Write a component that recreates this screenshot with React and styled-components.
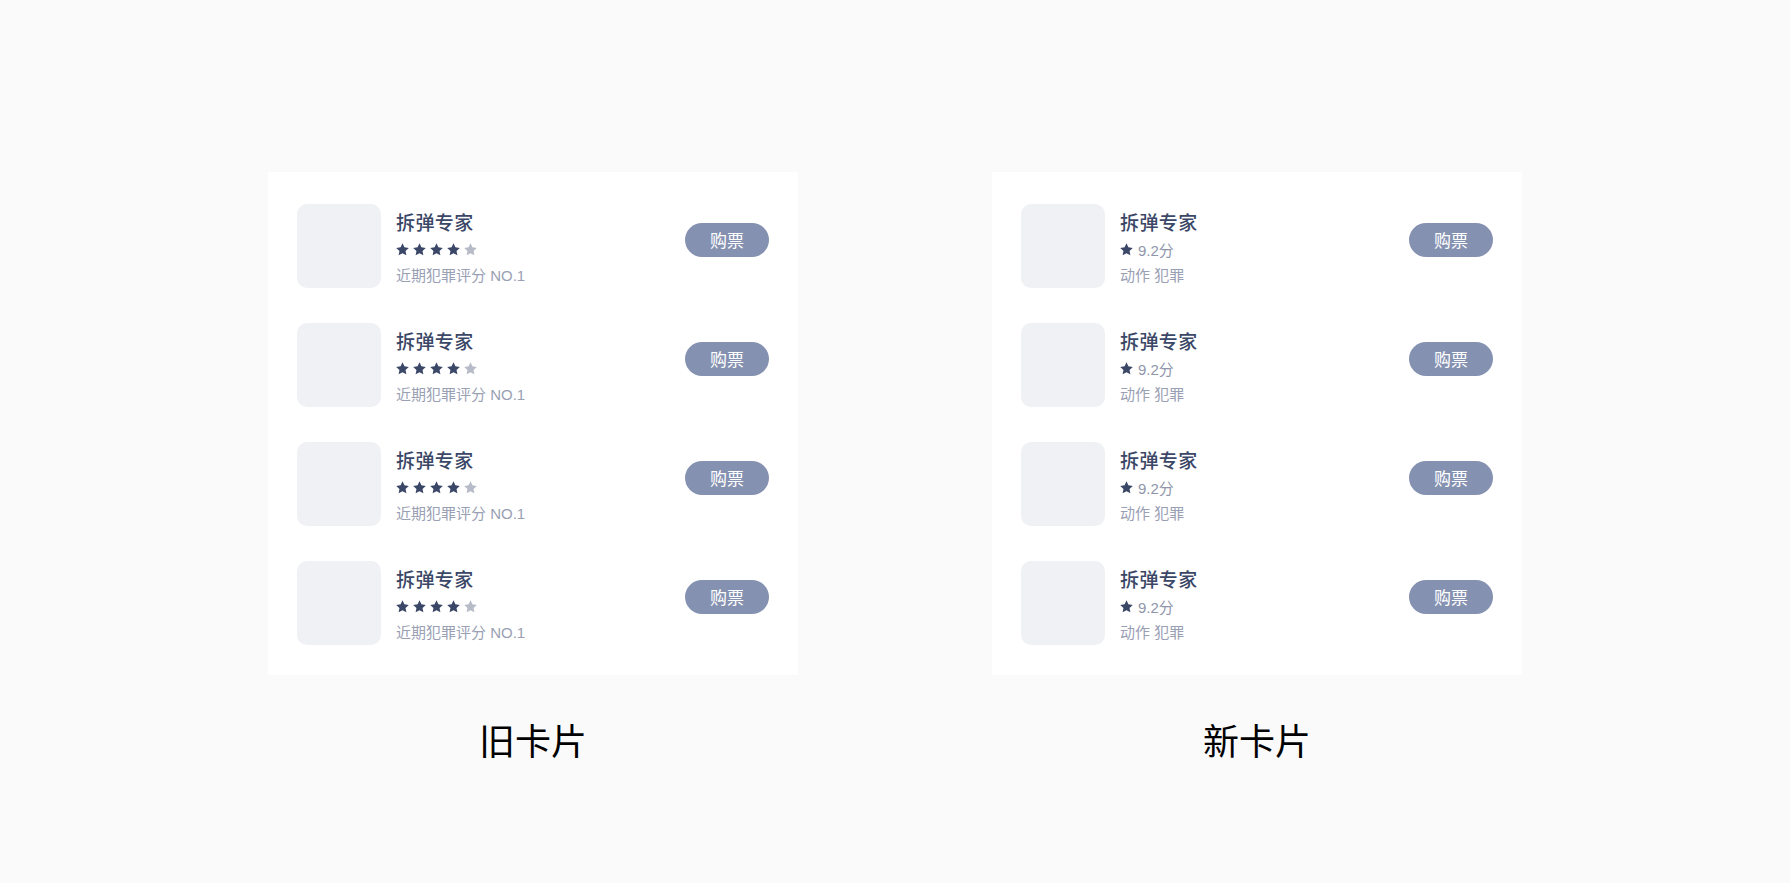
import React from 'react';
import styled, { createGlobalStyle } from 'styled-components';

const GlobalStyle = createGlobalStyle`
  html, body {
    margin: 0;
    padding: 0;
    background: #fafafa;
  }
  body {
    font-family: "Noto Sans CJK SC", "Noto Sans", sans-serif;
  }
`;

const Page = styled.div`
  width: 1790px;
  height: 883px;
  background: #fafafa;
  padding-top: 172px;
  box-sizing: border-box;
  display: flex;
  justify-content: center;
  gap: 194px;
`;

const Column = styled.div`
  display: flex;
  flex-direction: column;
  align-items: center;
`;

const Card = styled.div`
  width: 530px;
  height: 503px;
  box-sizing: border-box;
  background: #ffffff;
  padding: 32px 29px 30px 29px;
  display: flex;
  flex-direction: column;
  gap: 35px;
`;

const Row = styled.div`
  display: flex;
  align-items: flex-start;
  height: 84px;
`;

const Poster = styled.div`
  width: 84px;
  height: 84px;
  border-radius: 10px;
  background: #f0f1f5;
  flex-shrink: 0;
`;

const Info = styled.div`
  flex: 1;
  margin-left: 15px;
  padding-top: 4px;
  display: flex;
  flex-direction: column;
`;

const Title = styled.div`
  font-size: 19px;
  font-weight: 500;
  line-height: 28px;
  color: #3b4767;
  letter-spacing: 0.4px;
`;

const StarRow = styled.div`
  display: flex;
  align-items: center;
  gap: 4px;
  height: 13px;
  margin-top: 7px;
`;

const ScoreRow = styled.div`
  display: flex;
  align-items: center;
  gap: 5px;
  height: 20px;
  margin-top: 3px;
  font-family: "Liberation Sans", "Noto Sans CJK SC", sans-serif;
  font-size: 15px;
  color: #8f96ab;
`;

const Sub = styled.div`
  font-family: "Liberation Sans", "Noto Sans CJK SC", sans-serif;
  font-size: 15px;
  line-height: 24px;
  color: #9aa0b4;
  margin-top: ${p => (p.tight ? '5px' : '8px')};
`;

const BuyButton = styled.button`
  margin-top: 19px;
  width: 84px;
  height: 34px;
  border: none;
  border-radius: 17px;
  background: #8591b1;
  color: #ffffff;
  font-family: "Noto Sans CJK SC", sans-serif;
  font-size: 17px;
  line-height: 34px;
  padding: 0;
  flex-shrink: 0;
`;

const Label = styled.div`
  margin-top: 46px;
  font-size: 36px;
  line-height: 36px;
  color: #000000;
`;

function Star({ color }) {
  return (
    <svg width="13" height="13" viewBox="0 0 24 24">
      <path
        fill={color}
        d="M12 0.6l3.5 7.4 8.1 1-6 5.6 1.6 8.1L12 18.7l-7.2 4 1.6-8.1-6-5.6 8.1-1z"
      />
    </svg>
  );
}

function OldRow() {
  return (
    <Row>
      <Poster />
      <Info>
        <Title>拆弹专家</Title>
        <StarRow>
          {[0, 1, 2, 3, 4].map(i => (
            <Star key={i} color={i < 4 ? '#3b4767' : '#b7bbc8'} />
          ))}
        </StarRow>
        <Sub>近期犯罪评分 NO.1</Sub>
      </Info>
      <BuyButton>购票</BuyButton>
    </Row>
  );
}

function NewRow() {
  return (
    <Row>
      <Poster />
      <Info>
        <Title>拆弹专家</Title>
        <ScoreRow>
          <Star color="#3b4767" />
          <span>9.2分</span>
        </ScoreRow>
        <Sub tight>动作 犯罪</Sub>
      </Info>
      <BuyButton>购票</BuyButton>
    </Row>
  );
}

export default function App() {
  const rows = [0, 1, 2, 3];
  return (
    <>
      <GlobalStyle />
      <Page>
        <Column>
          <Card>
            {rows.map(i => <OldRow key={i} />)}
          </Card>
          <Label>旧卡片</Label>
        </Column>
        <Column>
          <Card>
            {rows.map(i => <NewRow key={i} />)}
          </Card>
          <Label>新卡片</Label>
        </Column>
      </Page>
    </>
  );
}
